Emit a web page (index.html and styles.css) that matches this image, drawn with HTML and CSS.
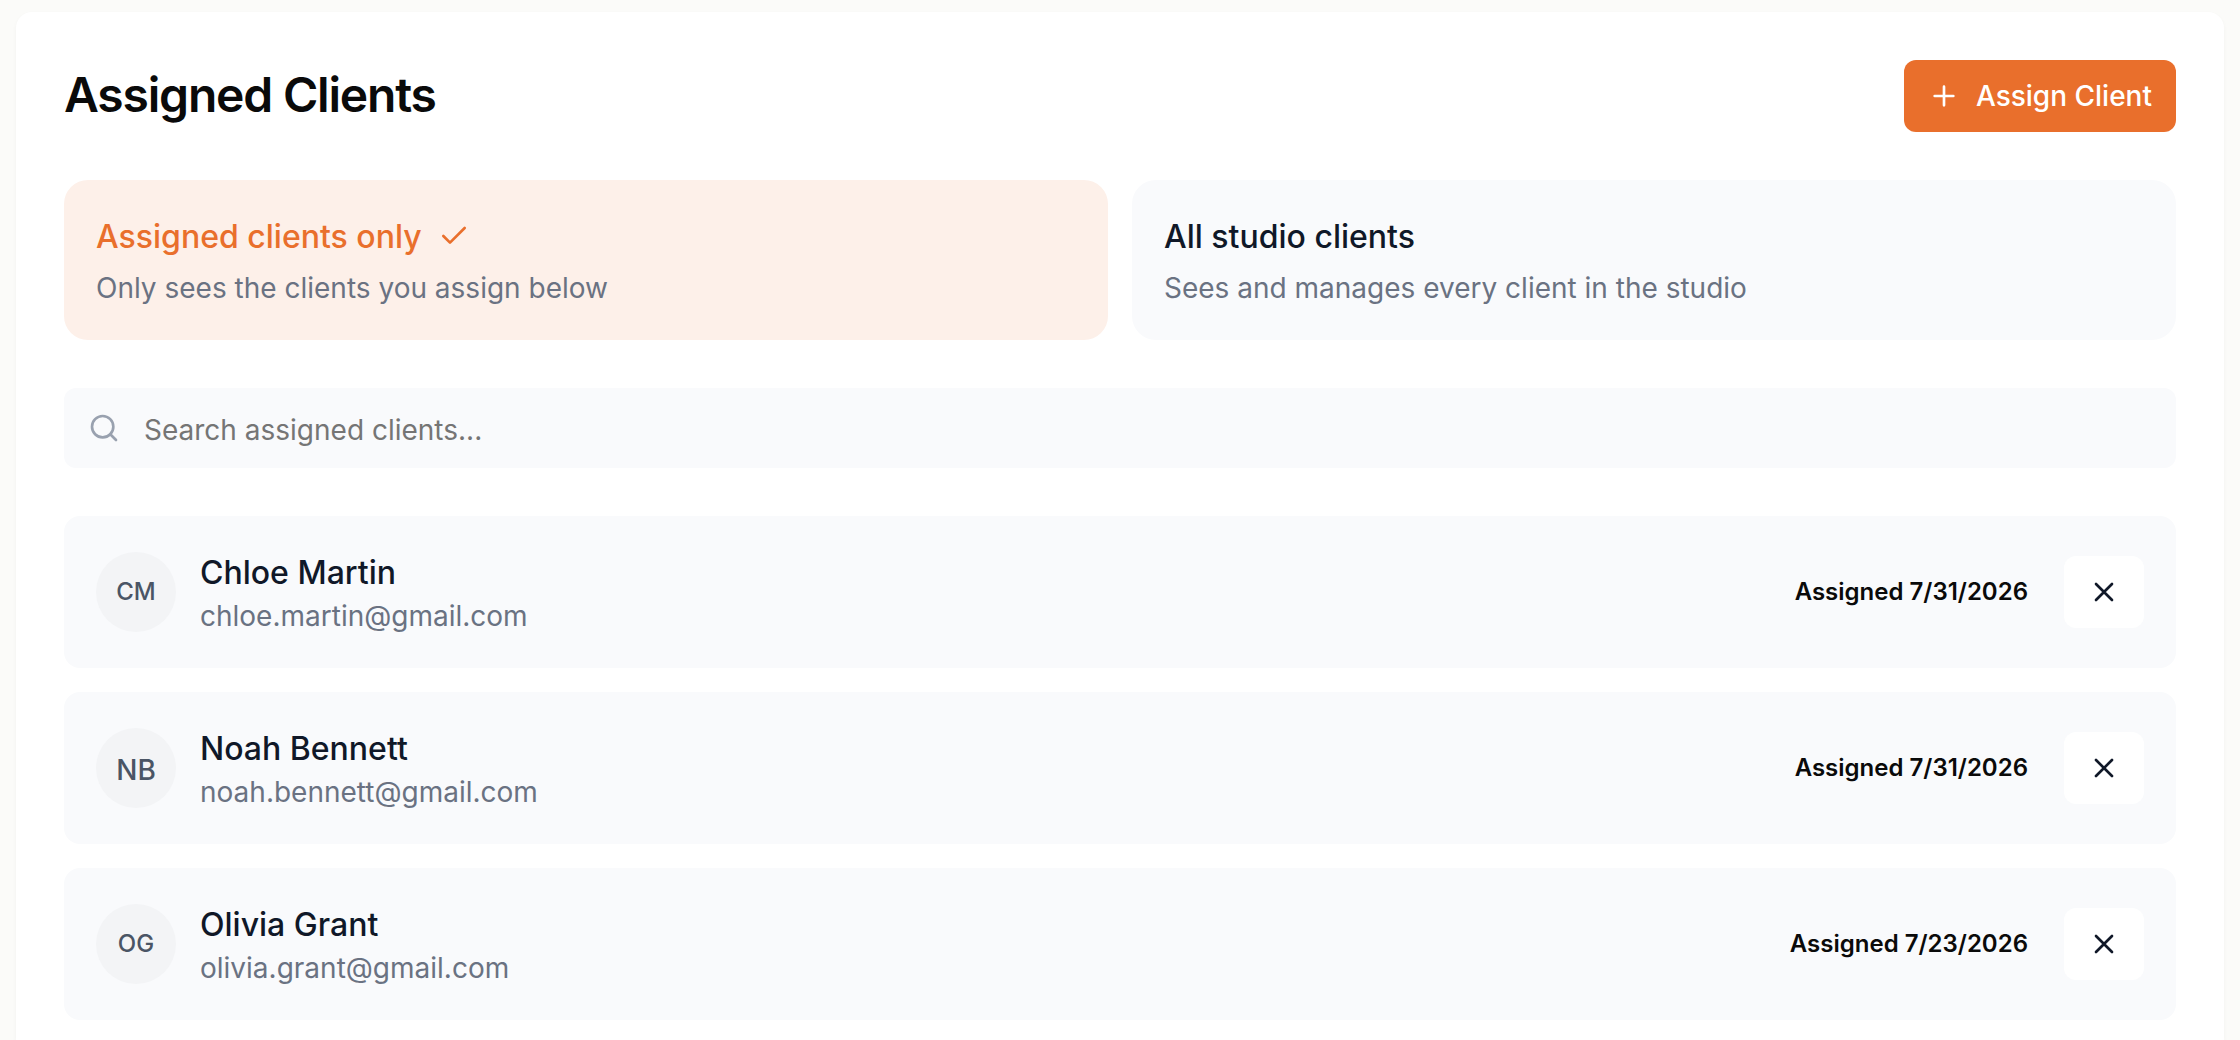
FILE: index.html
```html
<!DOCTYPE html>
<html lang="en">
<head>
<meta charset="utf-8">
<title>Assigned Clients</title>
<link rel="stylesheet" href="styles.css">
</head>
<body>
<main class="card">
  <header class="header">
    <h1 class="title">Assigned Clients</h1>
    <button class="assign" type="button">
      <svg class="icon" viewBox="0 0 24 24"><path d="M5 12h14M12 5v14"/></svg>
      Assign Client
    </button>
  </header>

  <section class="options">
    <div class="option option-active">
      <div class="option-title"><span class="option-label">Assigned clients only</span>
        <svg class="icon" viewBox="0 0 24 24"><path d="M20 6 9 17l-5-5"/></svg>
      </div>
      <div class="option-text">Only sees the clients you assign below</div>
    </div>
    <div class="option">
      <div class="option-title"><span class="option-label">All studio clients</span></div>
      <div class="option-text">Sees and manages every client in the studio</div>
    </div>
  </section>

  <label class="search">
    <svg class="icon" viewBox="0 0 24 24"><circle cx="11" cy="11" r="8"/><path d="m21 21-4.3-4.3"/></svg>
    <input class="search-input" type="text" placeholder="Search assigned clients...">
  </label>

  <section class="clients">
    <article class="client">
      <div class="avatar">CM</div>
      <div class="person">
        <div class="name">Chloe Martin</div>
        <div class="email">chloe.martin@gmail.com</div>
      </div>
      <div class="date">Assigned 7/31/2026</div>
      <button class="remove" type="button" aria-label="Remove"><svg class="icon" viewBox="0 0 24 24"><path d="M18 6 6 18M6 6l12 12"/></svg></button>
    </article>
    <article class="client">
      <div class="avatar avatar-large">NB</div>
      <div class="person">
        <div class="name">Noah Bennett</div>
        <div class="email">noah.bennett@gmail.com</div>
      </div>
      <div class="date">Assigned 7/31/2026</div>
      <button class="remove" type="button" aria-label="Remove"><svg class="icon" viewBox="0 0 24 24"><path d="M18 6 6 18M6 6l12 12"/></svg></button>
    </article>
    <article class="client">
      <div class="avatar">OG</div>
      <div class="person">
        <div class="name">Olivia Grant</div>
        <div class="email">olivia.grant@gmail.com</div>
      </div>
      <div class="date">Assigned 7/23/2026</div>
      <button class="remove" type="button" aria-label="Remove"><svg class="icon" viewBox="0 0 24 24"><path d="M18 6 6 18M6 6l12 12"/></svg></button>
    </article>
  </section>
</main>
</body>
</html>
```
FILE: styles.css
```css
* {
  box-sizing: border-box;
}

body {
  margin: 0;
  height: 1040px;
  padding: 12px 16px 0;
  background: #fbfbf9;
  color: #0a0a0a;
  font-family: Inter, "Liberation Sans", sans-serif;
}

button,
input {
  border: 0;
  font-family: inherit;
}

.card {
  display: flex;
  flex-direction: column;
  gap: 48px;
  height: 1028px;
  padding: 48px 48px 0;
  border-radius: 16px 16px 0 0;
  background: #fff;
  box-shadow: 0 2px 4px rgba(0, 0, 0, 0.04);
}

.icon {
  flex: none;
  width: 32px;
  height: 32px;
  fill: none;
  stroke: currentColor;
  stroke-width: 2;
  stroke-linecap: round;
  stroke-linejoin: round;
}

.header {
  display: flex;
  align-items: center;
  justify-content: space-between;
  height: 72px;
}

.title {
  margin: 0;
  padding-bottom: 2px;
  font-size: 48px;
  font-weight: 600;
  line-height: 64px;
  letter-spacing: -0.025em;
}

.assign {
  display: flex;
  align-items: center;
  gap: 16px;
  height: 72px;
  padding: 0 24px;
  border-radius: 12px;
  background: #e96f2c;
  color: #fff;
  font-size: 28px;
  font-weight: 500;
  line-height: 40px;
}

.options {
  display: grid;
  grid-template-columns: 1fr 1fr;
  gap: 24px;
}

.option {
  display: flex;
  flex-direction: column;
  gap: 8px;
  padding: 32px;
  border-radius: 24px;
  background: #f9fafc;
}

.option-title {
  display: flex;
  align-items: center;
  gap: 16px;
  height: 48px;
  color: #101828;
  font-size: 32px;
  font-weight: 500;
}

.option-label {
  padding-top: 2px;
  line-height: 48px;
}

.option-text {
  color: #6a7282;
  font-size: 28px;
  line-height: 40px;
}

.option-active {
  background: #fdf0e9;
}

.option-active .option-title {
  color: #e96f2c;
}

.search {
  display: flex;
  align-items: center;
  gap: 24px;
  height: 80px;
  padding: 0 24px;
  border-radius: 12px;
  background: #f9fafc;
  color: #99a1af;
}

.search-input {
  flex: 1;
  height: 80px;
  padding: 4px 0 0;
  background: transparent;
  font-size: 28px;
}

.search-input::placeholder {
  color: #757575;
}

.clients {
  display: flex;
  flex-direction: column;
  gap: 24px;
}

.client {
  display: flex;
  align-items: center;
  height: 152px;
  padding: 32px;
  border-radius: 16px;
  background: #f9fafc;
}

.avatar {
  display: flex;
  align-items: center;
  justify-content: center;
  width: 80px;
  height: 80px;
  margin-right: 24px;
  border-radius: 50%;
  background: #f3f4f6;
  color: #4a5565;
  font-size: 24px;
  font-weight: 500;
  line-height: 32px;
}

.avatar-large {
  padding-top: 4px;
  font-size: 28px;
  line-height: 40px;
}

.person {
  flex: 1;
}

.name {
  height: 48px;
  padding-top: 1px;
  color: #101828;
  font-size: 32px;
  font-weight: 500;
  line-height: 48px;
}

.email {
  color: #6a7282;
  font-size: 28px;
  line-height: 40px;
}

.date {
  margin-right: 36px;
  font-size: 24px;
  font-weight: 600;
  line-height: 32px;
}

.remove {
  display: flex;
  align-items: center;
  justify-content: center;
  width: 80px;
  height: 72px;
  padding: 0;
  border-radius: 12px;
  background: #fff;
  color: #101828;
}
```
